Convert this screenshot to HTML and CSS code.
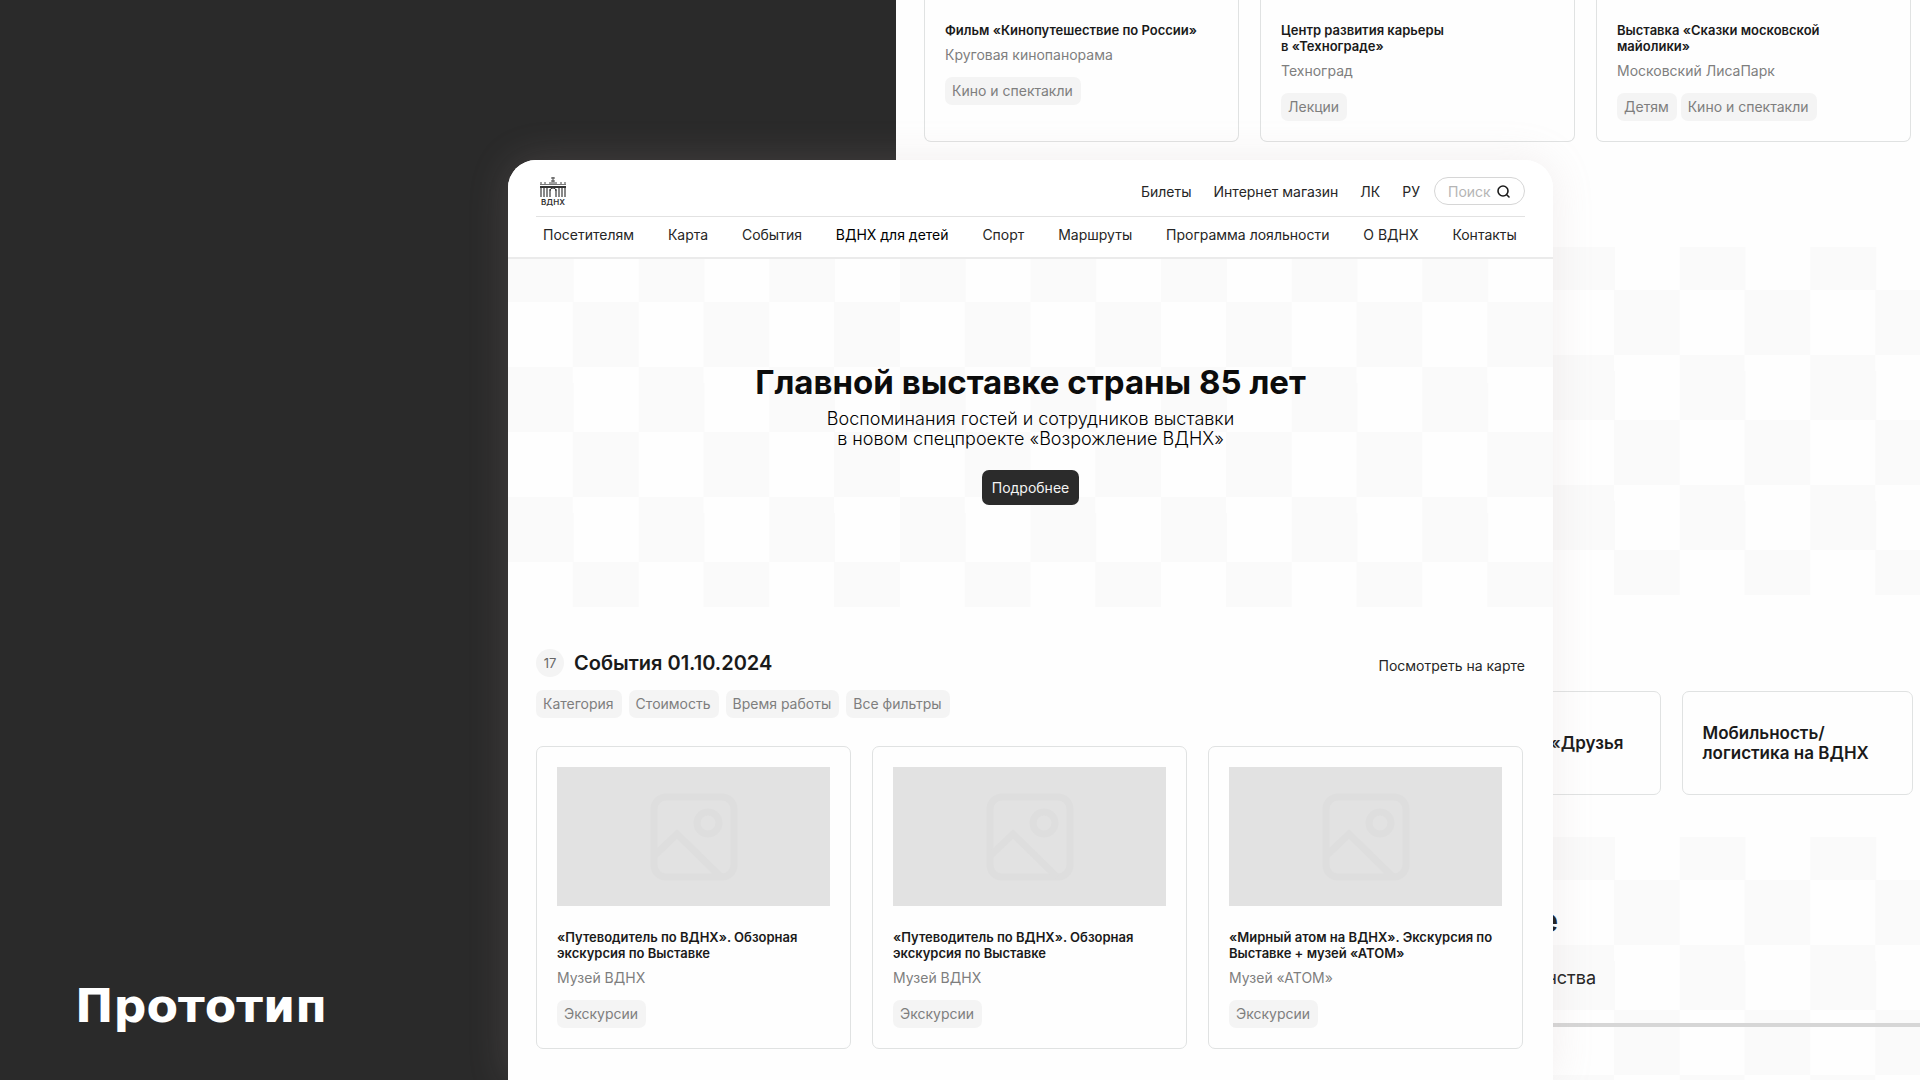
FILE: index.html
```html
<!DOCTYPE html>
<html lang="ru">
	<head>
		<meta charset="utf-8">
		<title>Прототип</title>
		<link rel="stylesheet" href="styles.css">
	</head>
	<body>
		<!-- общая иконка-заглушка для картинок -->
		<svg class="sprite" width="0" height="0">
			<symbol id="picture" viewBox="0 0 88 88">
				<rect x="4" y="4" width="80" height="80" rx="12"/>
				<circle cx="58" cy="30" r="11"/>
				<path d="M4 63L27 41L71 84"/>
			</symbol>
		</svg>

		<h1 class="caption">Прототип</h1>

		<!-- задняя страница -->
		<div class="page page-back">
			<div class="cards cards-cut">
				<article class="card">
					<h3>Фильм «Кинопутешествие по России»</h3>
					<p>Круговая кинопанорама</p>
					<div class="tags"><span class="tag">Кино и спектакли</span></div>
				</article>
				<article class="card">
					<h3>Центр развития карьеры<br>в «Технограде»</h3>
					<p>Техноград</p>
					<div class="tags"><span class="tag">Лекции</span></div>
				</article>
				<article class="card">
					<h3>Выставка «Сказки московской<br>майолики»</h3>
					<p>Московский ЛисаПарк</p>
					<div class="tags"><span class="tag">Детям</span><span class="tag">Кино и спектакли</span></div>
				</article>
			</div>
			<div class="hero checker"></div>
			<div class="links">
				<a class="link-card" href="#"></a>
				<a class="link-card" href="#"></a>
				<a class="link-card link-end" href="#">«Друзья</a>
				<a class="link-card" href="#">Мобильность/<br>логистика на ВДНХ</a>
			</div>
			<section class="promo checker">
				<h2>е</h2>
				<p>нства</p>
				<div class="promo-line"></div>
			</section>
		</div>

		<!-- главная страница -->
		<div class="page page-front">
			<header class="header">
				<div class="top">
					<a class="logo" href="#">
						<svg width="26" height="29" viewBox="0 0 26 29">
							<path d="M13 0V5M11 1H15M11 4H15M9 6H17" stroke="#444" stroke-width="1" fill="none"/>
							<path d="M1 5V7M5 5V7M21 5V7M25 5V7" stroke="#444" stroke-width="1"/>
							<rect x="0" y="7" width="26" height="1" fill="#777"/>
							<rect x="0" y="9" width="26" height="2" fill="#333"/>
							<path d="M1 11V20M4 11V20M7 11V20M10 12V20M16 12V20M19 11V20M22 11V20M25 11V20" stroke="#3a3a3a" stroke-width="1.2"/>
							<path d="M10 14Q10 11 13 11T16 14" stroke="#3a3a3a" fill="none"/>
							<text x="13" y="28" text-anchor="middle">ВДНХ</text>
						</svg>
					</a>
					<nav class="top-nav">
						<a href="#">Билеты</a>
						<a href="#">Интернет магазин</a>
						<a href="#">ЛК</a>
						<a href="#">РУ</a>
					</nav>
					<form class="search">
						<input type="text" placeholder="Поиск" aria-label="Поиск">
						<button type="button" aria-label="Найти">
							<svg width="13" height="13" viewBox="0 0 13 13">
								<circle cx="6" cy="6" r="5"/>
								<path d="M10 10L12 12"/>
							</svg>
						</button>
					</form>
				</div>
				<nav class="menu">
					<a href="#">Посетителям</a>
					<a href="#">Карта</a>
					<a href="#">События</a>
					<a class="active" href="#">ВДНХ для детей</a>
					<a href="#">Спорт</a>
					<a href="#">Маршруты</a>
					<a href="#">Программа лояльности</a>
					<a href="#">О ВДНХ</a>
					<a href="#">Контакты</a>
				</nav>
			</header>
			<section class="hero checker">
				<h2>Главной выставке страны 85 лет</h2>
				<p>Воспоминания гостей и сотрудников выставки<br>в новом спецпроекте «Возрожление ВДНХ»</p>
				<button class="more" type="button">Подробнее</button>
			</section>
			<section class="events">
				<div class="events-head">
					<span class="count">17</span>
					<h2>События 01.10.2024</h2>
					<a href="#">Посмотреть на карте</a>
				</div>
				<div class="filters">
					<button class="tag" type="button">Категория</button>
					<button class="tag" type="button">Стоимость</button>
					<button class="tag" type="button">Время работы</button>
					<button class="tag" type="button">Все фильтры</button>
				</div>
			</section>
			<div class="cards">
				<article class="card">
					<div class="picture"><svg><use href="#picture"/></svg></div>
					<h3>«Путеводитель по ВДНХ». Обзорная экскурсия по Выставке</h3>
					<p>Музей ВДНХ</p>
					<div class="tags"><span class="tag">Экскурсии</span></div>
				</article>
				<article class="card">
					<div class="picture"><svg><use href="#picture"/></svg></div>
					<h3>«Путеводитель по ВДНХ». Обзорная экскурсия по Выставке</h3>
					<p>Музей ВДНХ</p>
					<div class="tags"><span class="tag">Экскурсии</span></div>
				</article>
				<article class="card">
					<div class="picture"><svg><use href="#picture"/></svg></div>
					<h3>«Мирный атом на ВДНХ». Экскурсия по Выставке + музей «АТОМ»</h3>
					<p>Музей «АТОМ»</p>
					<div class="tags"><span class="tag">Экскурсии</span></div>
				</article>
			</div>
		</div>
	</body>
</html>
```

FILE: styles.css
```css
*{
	margin:0;
	padding:0;
	box-sizing: border-box;
}
body{
	position: relative;
	display: flex;
	align-items: flex-end;
	height:100vh;
	overflow: hidden;
	background: #2a2a2a;
	color:#262626;
	font:14px/17px Inter, "Noto Sans", sans-serif;
}
a{
	color:inherit;
	text-decoration: none;
}
button, input{
	font:inherit;
	border:0;
	background: none;
}
h2, h3{
	color:#1a1a1a;
}
.sprite{
	position: absolute;
}
.caption{
	padding:0 0 47px 75px;
	color:#fff;
	font:bold 46px/54px "DejaVu Sans", sans-serif;
}

/* две страницы лежат друг на друге */
.page{
	position: absolute;
	bottom:0;
	display: flex;
	flex-direction: column;
	background: #fefefe;
	overflow: hidden;
}
.page-back{
	top:0;
	left:896px;
	right:-21px;
}
.page-front{
	top:160px;
	left:508px;
	right:367px;
	border-radius: 28px 28px 0 0;
	box-shadow: 0 0 40px rgba(187,165,168,.18);
}

/* шахматный фон */
.checker{
	background: conic-gradient(#fafafa 25%, #fefefe 0 50%, #fafafa 0 75%, #fefefe 0) 0 43px / 12.5% 130px;
}

/* шапка */
.header{
	padding:0 28px;
	border-bottom:2px solid #ebebeb;
	background: #fff;
}
.top{
	display: flex;
	align-items: center;
	height:57px;
	padding-top:6px;
	border-bottom:1px solid #e2e2e2;
}
.logo{
	margin:0 auto 0 4px;
}
.logo svg{
	display: block;
}
.logo text{
	font-size:8px;
	font-weight: 600;
	fill:#333;
}
.top-nav{
	display: flex;
	gap:22px;
}
.search{
	display: flex;
	align-items: center;
	width:91px;
	height:28px;
	margin-left:14px;
	padding:0 14px 0 13px;
	border:1px solid #d6d6d6;
	border-radius: 14px;
}
.search input{
	flex:1;
	min-width:0;
	outline:0;
}
.search input::placeholder{
	color:#b5b5b5;
}
.search svg{
	display: block;
	fill:none;
	stroke:#1c1c1c;
	stroke-width:1.6;
	stroke-linecap: round;
}
.menu{
	display: flex;
	align-items: center;
	justify-content: space-between;
	height:40px;
	padding:0 8px 6px 7px;
}
.menu .active{
	color:#000;
}

/* баннер */
.hero{
	display: flex;
	flex-direction: column;
	align-items: center;
	justify-content: center;
	height:348px;
	text-align: center;
	color:#000;
}
.hero h2{
	color:#0c0c0c;
	font-size:33px;
	line-height:42px;
	font-weight: 700;
}
.hero p{
	margin:6px 0 21px;
	font-size:18px;
	line-height:20px;
	font-weight: 300;
}
.more{
	height:35px;
	padding:0 10px;
	border-radius: 7px;
	background: #2b2b2b;
	color:#f4f4f4;
}

/* события */
.events{
	padding:42px 28px 28px;
}
.events-head{
	display: flex;
	align-items: flex-end;
}
.count{
	width:28px;
	height:28px;
	border-radius: 50%;
	background: #f4f4f4;
	color:#666;
	font-size:13px;
	line-height:28px;
	text-align: center;
}
.events-head h2{
	margin:0 auto 0 10px;
	font-size:20px;
	line-height:28px;
	font-weight: 600;
}
.events-head a{
	line-height:22px;
}
.filters{
	display: flex;
	gap:7px;
	margin-top:13px;
}
.tag{
	height:28px;
	padding:0 8px 0 7px;
	border-radius: 7px;
	background: #f4f4f4;
	color:#7e7e7e;
	line-height:28px;
}

/* карточки */
.cards{
	display: grid;
	grid-template-columns: repeat(3, 1fr);
	gap:21px;
	padding:0 30px 0 28px;
}
.card{
	padding:20px;
	border:1px solid #e0e2e2;
	border-radius: 7px;
}
.card h3{
	font-size:13px;
	line-height:16px;
	font-weight: 600;
}
.card p{
	margin:8px 0 14px;
	color:#7e7e7e;
}
.picture{
	display: flex;
	align-items: center;
	justify-content: center;
	height:139px;
	margin-bottom:23px;
	background: #e2e2e2;
}
.picture svg{
	width:88px;
	height:88px;
	fill:none;
	stroke:#dedede;
	stroke-width:7;
}
.tags{
	display: flex;
	gap:4px;
}
/* верх карточек уходит за край экрана */
.cards-cut .card{
	padding-top:22px;
	border-top:0;
	border-radius: 0 0 7px 7px;
}

/* нижние блоки задней страницы */
.page-back .hero{
	margin-top:105px;
}
.links{
	display: grid;
	grid-template-columns: repeat(4, 1fr);
	gap:21px;
	margin:96px 0 42px;
	padding:0 28px;
}
.link-card{
	display: flex;
	align-items: center;
	height:104px;
	padding:0 20px;
	border:1px solid #e0e2e2;
	border-radius: 7px;
	color:#1a1a1a;
	font-size:17px;
	line-height:20px;
	font-weight: 600;
}
.link-end{
	justify-content: flex-end;
	padding-right:36px;
}
.promo{
	flex:1;
	padding-top:64px;
	text-align: right;
}
.promo h2{
	padding-right:383px;
	font-size:32px;
	line-height:40px;
	font-weight: 700;
}
.promo p{
	margin:27px 0 35px;
	padding-right:345px;
	font-size:18px;
	line-height:20px;
}
.promo-line{
	height:4px;
	background: #d6d6d6;
}
```
